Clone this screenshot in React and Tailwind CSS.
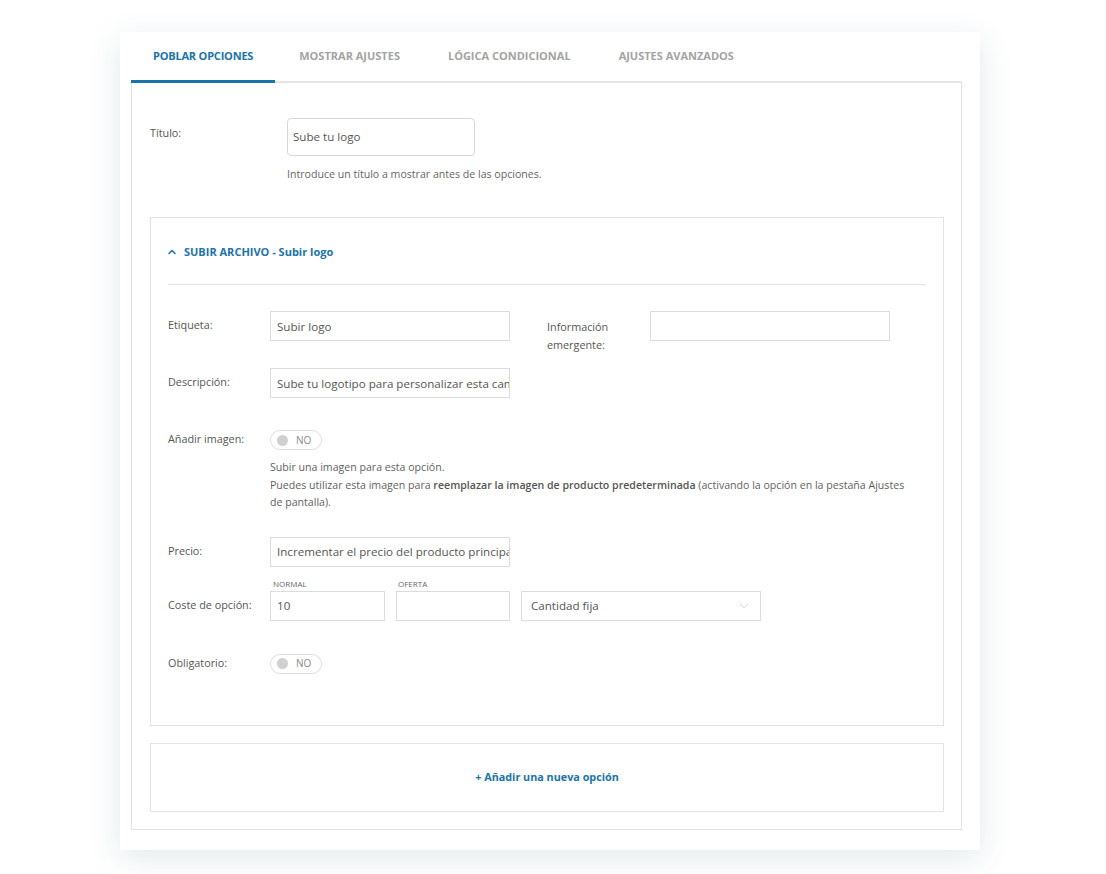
import { ChevronUp, ChevronDown } from 'lucide-react';

const tabs = ['POBLAR OPCIONES', 'MOSTRAR AJUSTES', 'LÓGICA CONDICIONAL', 'AJUSTES AVANZADOS'];

function Toggle() {
  return (
    <div className="flex items-center gap-[8px] w-[52px] h-[20px] rounded-full border border-[#dcdcdc] pl-[6px]">
      <span className="w-[11px] h-[11px] rounded-full bg-[#d0d0d0]" />
      <span className="text-[10px] text-[#888]">NO</span>
    </div>
  );
}

function TextInput({ value, className = 'w-[240px]' }) {
  return (
    <div className={`${className} h-[30px] border border-[#dcdcdc] flex items-center px-[6px] overflow-hidden whitespace-nowrap text-[11.6px] text-[#555]`}>
      {value}
    </div>
  );
}

export default function App() {
  return (
    <div className="min-h-screen bg-white pt-[32px] pl-[120px] font-['Open_Sans',sans-serif]">
      <div className="w-[860px] bg-white shadow-[0_8px_30px_rgba(30,90,110,0.13)] pl-[11px] pr-[18px] pb-[20px]">
        {/* Tabs */}
        <div className="flex h-[51px]">
          {tabs.map((t, i) => (
            <div
              key={t}
              className={`flex items-center text-[11px] font-bold ${
                i === 0
                  ? 'px-[22px] tracking-[-0.2px] text-[#1a73aa] border-b-[3px] border-[#1a73aa]'
                  : 'px-[24px] text-[#a3a3a3] border-b-2 border-[#e5e5e5]'
              }`}
            >
              <span className={i === 0 ? 'mt-[0px]' : 'mt-[-1px]'}>{t}</span>
            </div>
          ))}
          <div className="flex-1 border-b-2 border-[#e5e5e5]" />
        </div>

        {/* Panel */}
        <div className="border border-t-0 border-[#e2e2e2] pl-[18px] pr-[17px] pt-[35px] pb-[17px]">
          <div className="flex">
            <div className="w-[137px] pt-[7px] text-[10.8px] text-[#555]">Título:</div>
            <div>
              <div className="w-[188px] h-[38px] border border-[#d6d6d6] rounded-[4px] flex items-center px-[5px] text-[11.6px] text-[#555]">
                Sube tu logo
              </div>
              <p className="mt-[11px] text-[10.6px] text-[#666]">Introduce un título a mostrar antes de las opciones.</p>
            </div>
          </div>

          {/* Option box */}
          <div className="mt-[34px] border border-[#e2e2e2] px-[17px] pt-[26px] pb-[51px]">
            <div className="flex items-center gap-[6px] text-[11px] font-bold text-[#1a73aa]">
              <ChevronUp size={12} strokeWidth={3} className="-ml-[2px]" />
              <span>SUBIR ARCHIVO - Subir logo</span>
            </div>
            <div className="mt-[24px] h-px bg-[#e2e2e2]" />

            <div className="mt-[26px] flex flex-col">
              <div className="flex h-[30px]">
                <div className="w-[102px] pt-[6px] text-[10.8px] text-[#555]">Etiqueta:</div>
                <TextInput value="Subir logo" />
                <div className="ml-[37px] w-[103px] pt-[7px] text-[10.8px] leading-[18px] text-[#555]">
                  Información
                  <br />
                  emergente:
                </div>
                <TextInput value="" />
              </div>

              <div className="flex mt-[27px]">
                <div className="w-[102px] pt-[6px] text-[10.8px] text-[#555]">Descripción:</div>
                <TextInput value="Sube tu logotipo para personalizar esta camiseta" />
              </div>

              <div className="flex mt-[32px]">
                <div className="w-[102px] pt-[1px] text-[10.8px] text-[#555]">Añadir imagen:</div>
                <div>
                  <Toggle />
                  <div className="mt-[9px] text-[10.6px] leading-[17.5px] text-[#5f5f5f] w-[640px]">
                    Subir una imagen para esta opción.
                    <br />
                    Puedes utilizar esta imagen para{' '}
                    <span className="font-semibold text-[#555]">reemplazar la imagen de producto predeterminada</span>{' '}
                    (activando la opción en la pestaña Ajustes de pantalla).
                  </div>
                </div>
              </div>

              <div className="flex mt-[25px]">
                <div className="w-[102px] pt-[6px] text-[10.8px] text-[#555]">Precio:</div>
                <TextInput value="Incrementar el precio del producto principal" />
              </div>

              <div className="flex mt-[12px]">
                <div className="w-[102px] pt-[18px] text-[10.8px] text-[#555]">Coste de opción:</div>
                <div>
                  <div className="pl-[3px] h-[12px] leading-[10px] text-[8px] text-[#666]">NORMAL</div>
                  <TextInput value="10" className="w-[115px]" />
                </div>
                <div className="ml-[11px]">
                  <div className="pl-[2px] h-[12px] leading-[10px] text-[8px] text-[#666]">OFERTA</div>
                  <TextInput value="" className="w-[114px]" />
                </div>
                <div className="ml-[11px] pt-[12px]">
                  <div className="w-[240px] h-[30px] border border-[#dcdcdc] flex items-center justify-between pl-[9px] pr-[9px] text-[11.6px] text-[#555]">
                    <span>Cantidad fija</span>
                    <ChevronDown size={14} strokeWidth={1.2} className="text-[#bbb]" />
                  </div>
                </div>
              </div>

              <div className="flex mt-[33px]">
                <div className="w-[102px] pt-[1px] text-[10.8px] text-[#555]">Obligatorio:</div>
                <Toggle />
              </div>
            </div>
          </div>

          {/* Add new option */}
          <div className="mt-[17px] h-[69px] border border-[#e2e2e2] flex items-center justify-center text-[10.8px] font-bold text-[#1a73aa]">
            + Añadir una nueva opción
          </div>
        </div>
      </div>
    </div>
  );
}
